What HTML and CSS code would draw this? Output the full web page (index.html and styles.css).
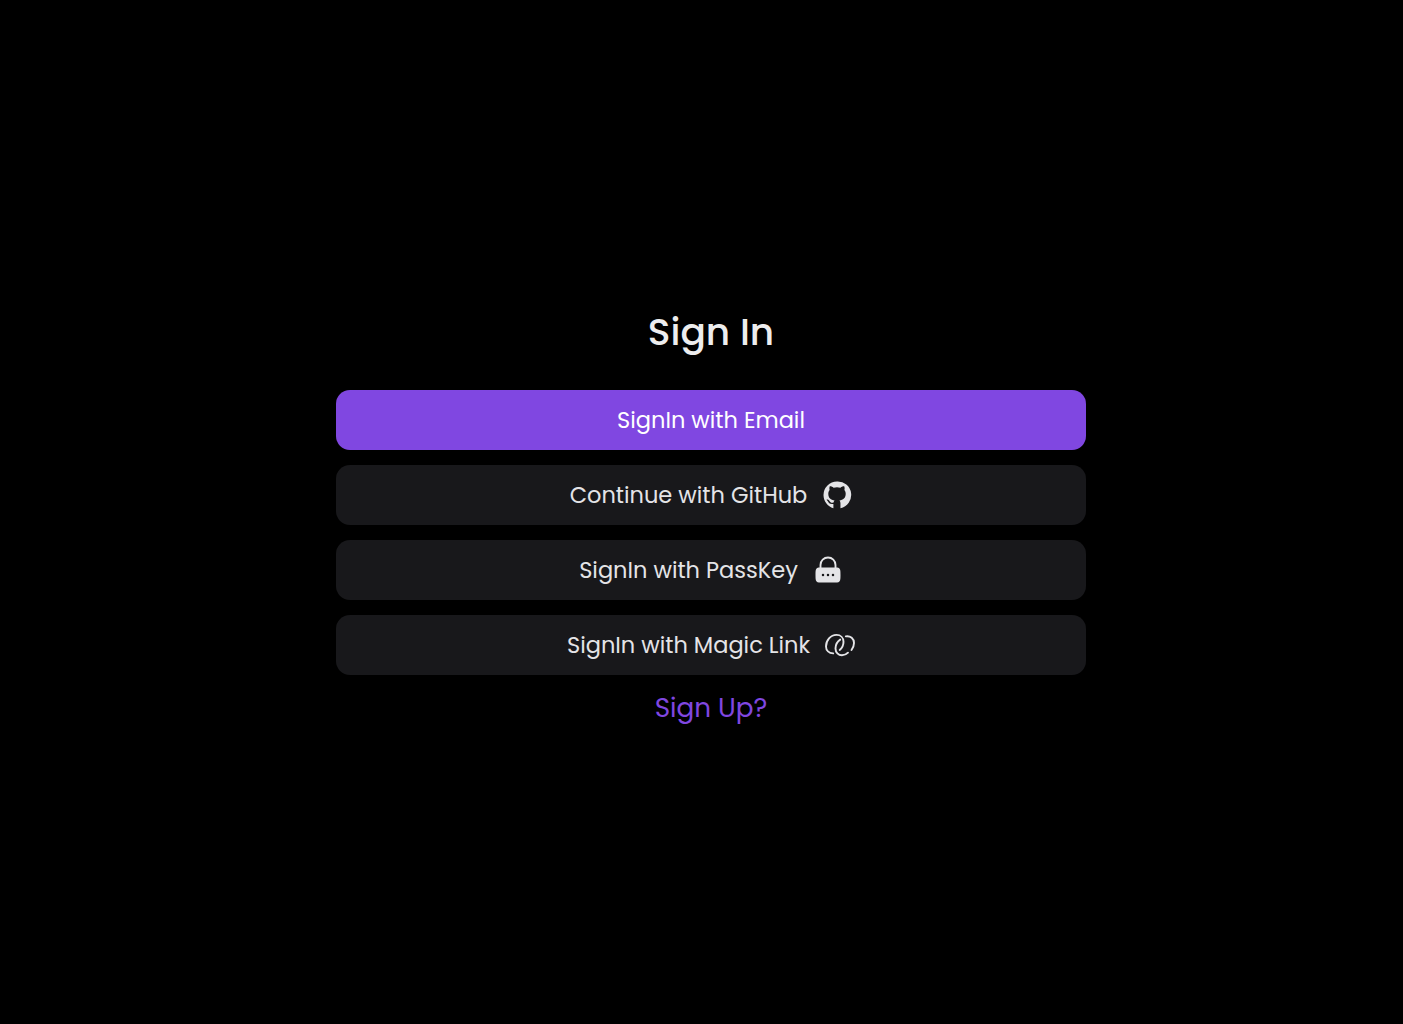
FILE: index.html
```html
<!DOCTYPE html>
<html lang="en">
<head>
<meta charset="utf-8">
<title>Sign In</title>
<link rel="stylesheet" href="styles.css">
</head>
<body>
<main class="signin">
  <h1 class="title">Sign In</h1>
  <div class="options">
    <button class="option option-primary"><span class="label">SignIn with Email</span></button>
    <button class="option"><span class="label">Continue with GitHub</span>
      <svg class="icon" viewBox="0 0 20 20" fill="currentColor"><path d="M10 1a9 9 0 0 0-9 9c0 4.2 2.8 7.7 6.6 8.8V16c-2.5.4-3.1-.8-3.7-1.8-.4-.6-.8-.8-.8-1 0-.3 1.2-.3 1.9.8.7 1.1 1.3 1.4 2.7 1 .1-.6.4-1 .7-1.3-2.5-.3-4.2-1.6-4.2-4.5 0-1 .3-1.8.9-2.5-.3-.8-.2-1.8.1-2.5.9-.1 1.8.4 2.5.9a8.600 8.600 0 0 1 4.600 0c.7-.5 1.600-1 2.500-.9.3.7.4 1.700.1 2.500.6.7.9 1.500.9 2.500 0 2.900-1.700 4.200-4.200 4.500.5.5.7 1.100.7 1.900v3.200A9 9 0 0 0 10 1z"/></svg>
    </button>
    <button class="option"><span class="label">SignIn with PassKey</span>
      <svg class="icon" viewBox="0 0 24 24" fill="currentColor"><path fill-rule="evenodd" d="M5.25 10.055V8a6.75 6.75 0 0 1 13.5 0v2.055c1.115.083 1.84.293 2.371.824C22 11.757 22 13.172 22 16s0 4.243-.879 5.121C20.243 22 18.828 22 16 22H8c-2.828 0-4.243 0-5.121-.879C2 20.243 2 18.828 2 16s0-4.243.879-5.121c.53-.531 1.256-.741 2.371-.824M6.75 8a5.25 5.25 0 0 1 10.5 0v2.004Q16.676 9.999 16 10H8q-.677-.001-1.25.004zM8 17a1 1 0 1 0 0-2a1 1 0 0 0 0 2m4 0a1 1 0 1 0 0-2a1 1 0 0 0 0 2m5-1a1 1 0 1 1-2 0a1 1 0 0 1 2 0"/></svg>
    </button>
    <button class="option"><span class="label">SignIn with Magic Link</span>
      <svg class="icon" viewBox="0 0 30 30" fill="none" stroke="currentColor" stroke-width="1.9" stroke-linecap="round"><path d="M8.2 23.4C4 23.2 1 20.5 1 16.5C1 10.5 5.5 4.9 11.5 4.9C15.6 4.9 18.5 7.7 18.5 11.8C18.5 15 17.2 18 14.7 20"/><path d="M15.2 9.6C12.3 11.6 10.5 15 10.5 18.4C10.5 22.4 13.4 25.2 17 25.2C19.4 25.2 21.5 24.3 23 22.7"/><path d="M20.8 6.4C25.6 5.7 29 8.7 29 13C29 15.7 28 18 26.5 20"/></svg>
    </button>
  </div>
  <a class="signup">Sign Up?</a>
</main>
</body>
</html>
```
FILE: styles.css
```css
* { box-sizing: border-box; }
body {
  margin: 0;
  min-height: 100vh;
  background: #000;
  color: #e4e4e7;
  font-family: Poppins, Inter, sans-serif;
}
.signin {
  display: flex;
  flex-direction: column;
  align-items: center;
  padding: 302px 0 0 19px;
}
.title {
  margin: 0 0 28px;
  font-size: 37.5px;
  line-height: 60px;
  font-weight: 500;
  color: #ededee;
}
.options {
  display: grid;
  gap: 15px;
  width: 750px;
}
.option {
  display: flex;
  justify-content: center;
  align-items: center;
  gap: 15px;
  height: 60px;
  padding: 0;
  border: 0;
  border-radius: 14px;
  background: #18181b;
  color: #e4e4e7;
  font: 400 22.5px/30px Poppins, Inter, sans-serif;
}
.option-primary { background: #8047e1; color: #fff; }
.label { white-space: nowrap; }
.icon { width: 30px; height: 30px; flex: none; }
.signup {
  margin-top: 13px;
  font-size: 26.25px;
  line-height: 40px;
  color: #8047e1;
}
```
